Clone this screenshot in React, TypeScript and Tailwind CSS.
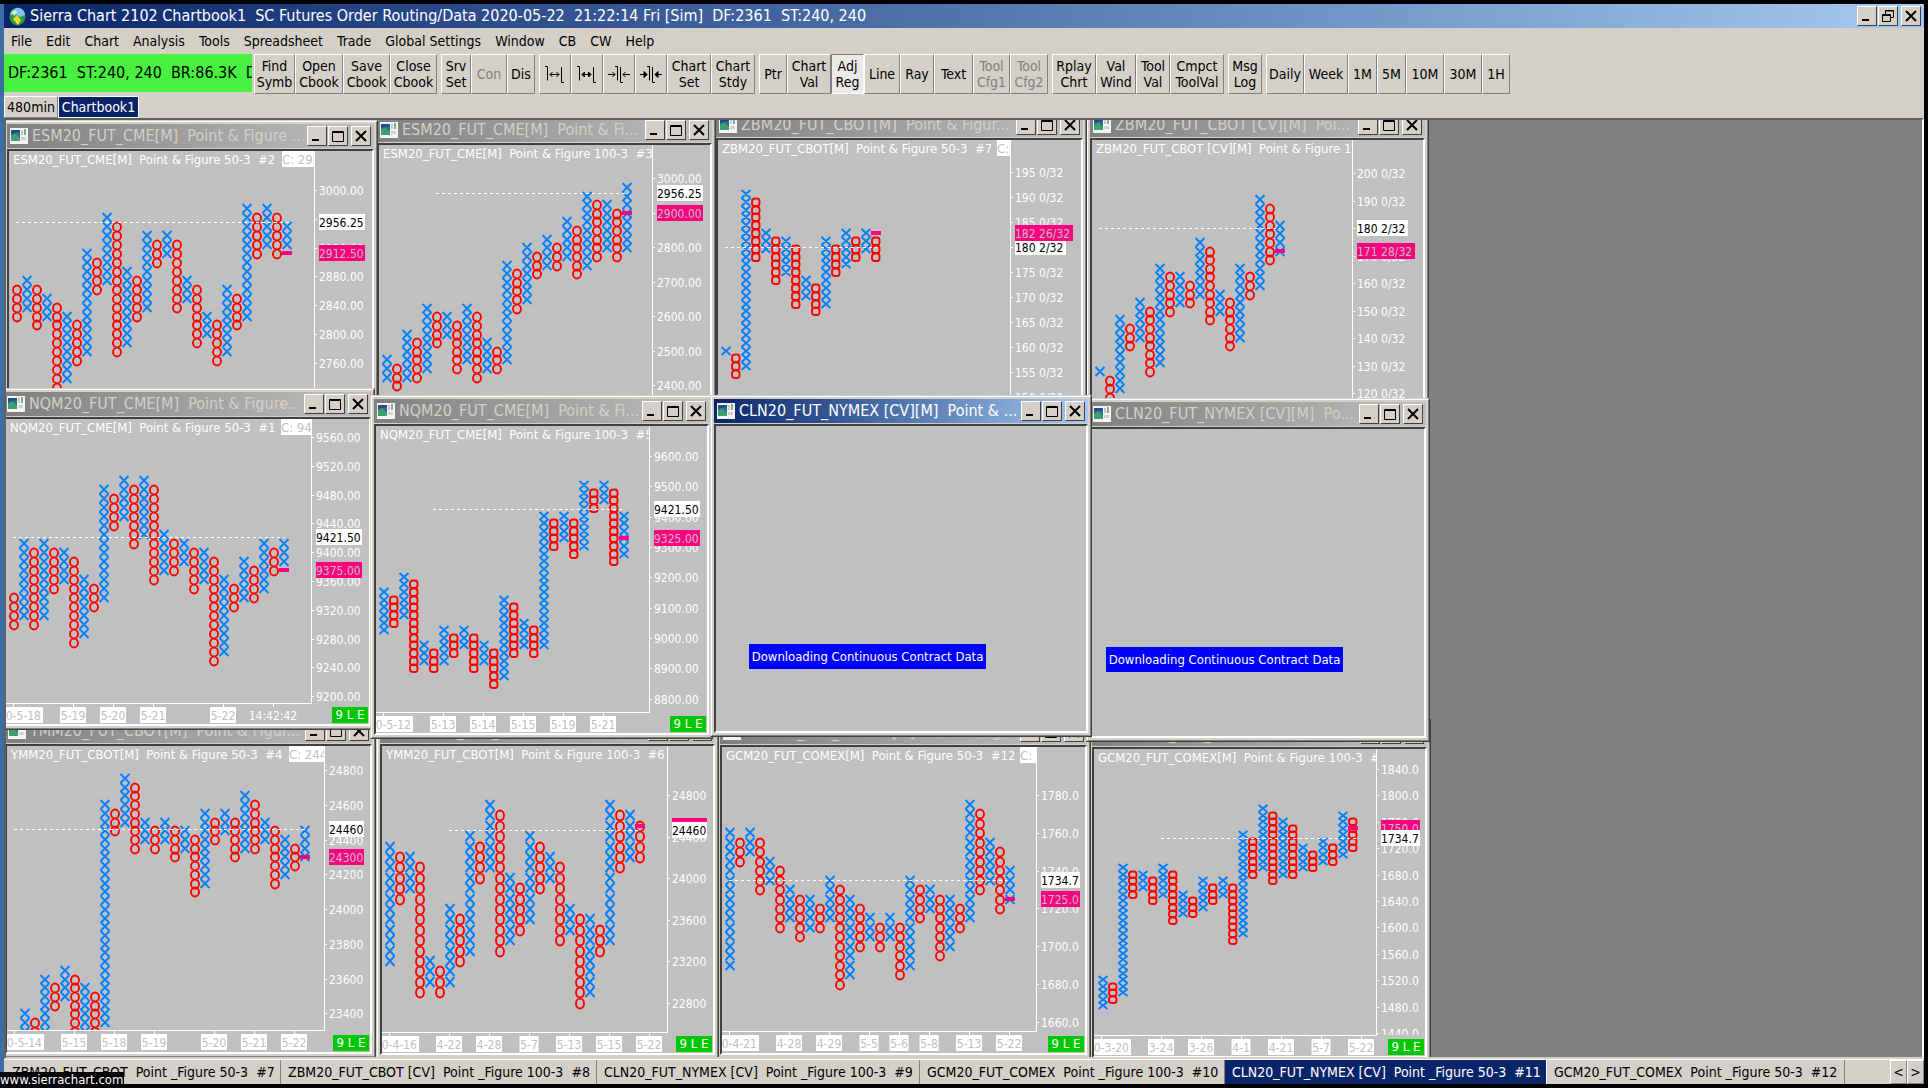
import clsx from "clsx";
import type { ReactNode } from "react";

type DateMark = { x: number; label: string; w?: number; plain?: boolean };

type ChartSpec = {
  header: string;
  closeAt?: number;
  close?: string;
  first: "X" | "O";
  x0?: number;
  y0: number;
  pitch: number;
  // one entry per column: top row - number of boxes
  cols: string;
  axisX: number;
  axisY?: number;
  scale: { from: number; step: number; count: number; y: number; dy: number };
  format: (v: number) => string;
  line: { x1: number; x2: number; y: number };
  last: { label: string; y: number; w: number };
  box: { label: string; y: number; w: number };
  boxOnTop?: boolean;
  mark: { x: number; y: number };
  dates?: DateMark[];
};

type WindowSpec = {
  title: string;
  place: string;
  active?: boolean;
  chart?: ChartSpec;
  loading?: string;
};

const cents = (v: number) => v.toFixed(2);
const tenths = (v: number) => v.toFixed(1);
const whole = (v: number) => String(v);
const bond = (v: number) => `${v} 0/32`;

const es50: ChartSpec = {
  header: "ESM20_FUT_CME[M]  Point & Figure 50-3  #2",
  closeAt: 273,
  close: "C: 2956.25",
  first: "O",
  y0: 53,
  pitch: 8.96,
  cols: "9-4 8-4 9-5 10-3 11-10 12-8 13-5 5-12 6-4 1-8 2-15 7-9 8-5 3-9 4-3 3-3 4-8 8-3 9-7 12-3 13-5 9-8 10-4 0-13 1-5 0-5 1-5 2-3",
  axisX: 305,
  scale: { from: 3000, step: -40, count: 8, y: 39, dy: 28.8 },
  format: cents,
  line: { x1: 7, x2: 283, y: 71 },
  last: { label: "2956.25", y: 71, w: 46 },
  box: { label: "2912.50", y: 102, w: 46 },
  mark: { x: 273, y: 100 },
};

const es100: ChartSpec = {
  header: "ESM20_FUT_CME[M]  Point & Figure 100-3  #3",
  first: "X",
  y0: 38,
  pitch: 8.62,
  cols: "20-3 21-3 17-6 18-5 14-8 15-4 15-3 16-6 14-7 15-8 18-4 19-3 9-12 10-5 7-7 8-3 6-4 7-3 4-5 5-6 1-9 2-7 2-6 3-6 0-8",
  axisX: 273,
  scale: { from: 3000, step: -100, count: 7, y: 33, dy: 34.5 },
  format: cents,
  line: { x1: 57, x2: 246, y: 48 },
  last: { label: "2956.25", y: 48, w: 46 },
  box: { label: "2900.00", y: 68, w: 46 },
  mark: { x: 243, y: 66 },
};

const zb50: ChartSpec = {
  header: "ZBM20_FUT_CBOT[M]  Point & Figure 50-3  #7",
  closeAt: 279,
  close: "C: 180",
  first: "X",
  y0: 50,
  pitch: 7.83,
  cols: "20-1 21-3 0-23 1-8 5-3 6-6 6-5 7-8 11-3 12-4 6-9 7-4 5-5 6-3 5-3 6-3",
  axisX: 292,
  scale: { from: 195, step: -5, count: 10, y: 32, dy: 25 },
  format: bond,
  line: { x1: 7, x2: 159, y: 107 },
  last: { label: "180 2/32", y: 107, w: 51 },
  box: { label: "182 26/32", y: 93, w: 58 },
  boxOnTop: true,
  mark: { x: 153, y: 91 },
};

const zb100: ChartSpec = {
  header: "ZBM20_FUT_CBOT [CV][M]  Point & Figure 100-3  #8",
  first: "X",
  y0: 55,
  pitch: 8.6,
  cols: "20-1 21-3 14-9 15-3 12-5 13-8 8-12 9-5 9-4 10-3 5-7 6-9 11-3 12-6 8-9 9-3 0-11 1-7 3-4",
  axisX: 260,
  scale: { from: 200, step: -10, count: 9, y: 33, dy: 27.5 },
  format: bond,
  line: { x1: 7, x2: 188, y: 88 },
  last: { label: "180 2/32", y: 88, w: 51 },
  box: { label: "171 28/32", y: 111, w: 58 },
  mark: { x: 183, y: 109 },
};

const nq50: ChartSpec = {
  header: "NQM20_FUT_CME[M]  Point & Figure 50-3  #1",
  closeAt: 275,
  close: "C: 9421.50",
  first: "O",
  y0: 57,
  pitch: 9,
  cols: "13-4 7-9 8-9 7-9 8-5 8-4 9-10 11-7 12-3 1-13 2-4 0-5 1-7 0-7 1-11 6-5 7-4 7-3 8-5 8-4 9-12 11-9 12-3 9-5 10-4 7-6 8-3 7-3",
  axisX: 305,
  axisY: 284,
  scale: { from: 9560, step: -40, count: 10, y: 18, dy: 28.8 },
  format: cents,
  line: { x1: 7, x2: 278, y: 118 },
  last: { label: "9421.50", y: 118, w: 46 },
  box: { label: "9375.00", y: 151, w: 46 },
  mark: { x: 273, y: 149 },
  dates: [
    { x: 7, label: "2020-5-18", w: 60 },
    { x: 67, label: "5-19" },
    { x: 107, label: "5-20" },
    { x: 147, label: "5-21" },
    { x: 217, label: "5-22" },
    { x: 267, label: "14:42:42", plain: true },
  ],
};

const nq100: ChartSpec = {
  header: "NQM20_FUT_CME[M]  Point & Figure 100-3  #5",
  first: "X",
  y0: 55,
  pitch: 7.64,
  cols: "14-6 15-4 12-6 13-12 21-3 22-3 19-5 20-3 19-3 20-5 21-3 22-5 15-11 16-7 18-4 19-4 4-18 5-4 4-4 5-5 0-9 1-3 0-3 1-10 4-6",
  axisX: 273,
  axisY: 286,
  scale: { from: 9600, step: -100, count: 9, y: 30, dy: 30.33 },
  format: cents,
  line: { x1: 57, x2: 246, y: 83 },
  last: { label: "9421.50", y: 83, w: 46 },
  box: { label: "9325.00", y: 112, w: 46 },
  mark: { x: 243, y: 110 },
  dates: [
    { x: 7, label: "2020-5-12", w: 60 },
    { x: 67, label: "5-13" },
    { x: 107, label: "5-14" },
    { x: 147, label: "5-15" },
    { x: 187, label: "5-19" },
    { x: 227, label: "5-21" },
  ],
};

const ym50: ChartSpec = {
  header: "YMM20_FUT_CBOT[M]  Point & Figure 50-3  #4",
  closeAt: 282,
  close: "C: 24460",
  first: "X",
  x0: 13,
  y0: 28,
  pitch: 8.72,
  cols: "27-3 28-3 23-8 24-3 22-4 23-8 24-6 25-6 3-26 4-3 0-6 1-8 5-3 6-3 5-3 6-4 6-3 7-7 4-9 5-3 4-3 5-5 2-7 3-6 5-3 6-7 7-5 8-3 6-4",
  axisX: 317,
  axisY: 284,
  scale: { from: 24800, step: -200, count: 8, y: 24, dy: 34.75 },
  format: whole,
  line: { x1: 7, x2: 298, y: 83 },
  last: { label: "24460", y: 83, w: 35 },
  box: { label: "24300", y: 111, w: 35 },
  mark: { x: 293, y: 109 },
  dates: [
    { x: 7, label: "2020-5-14", w: 60 },
    { x: 67, label: "5-15" },
    { x: 107, label: "5-18" },
    { x: 147, label: "5-19" },
    { x: 207, label: "5-20" },
    { x: 247, label: "5-21" },
    { x: 287, label: "5-22" },
  ],
};

const ym100: ChartSpec = {
  header: "YMM20_FUT_CBOT[M]  Point & Figure 100-3  #6",
  first: "X",
  y0: 54,
  pitch: 10.4,
  cols: "4-12 5-5 5-4 6-13 15-3 16-3 10-8 11-5 3-12 4-4 0-7 1-14 7-7 8-5 3-9 4-5 5-3 6-8 10-3 11-9 11-8 12-3 0-14 1-6 1-5 2-4",
  axisX: 285,
  axisY: 286,
  scale: { from: 24800, step: -400, count: 6, y: 49, dy: 41.6 },
  format: whole,
  line: { x1: 67, x2: 258, y: 84 },
  last: { label: "24460", y: 84, w: 35 },
  box: { label: "24500", y: 80, w: 35 },
  mark: { x: 253, y: 78 },
  dates: [
    { x: 7, label: "2020-4-16", w: 60 },
    { x: 67, label: "4-22" },
    { x: 107, label: "4-28" },
    { x: 147, label: "5-7", w: 19 },
    { x: 187, label: "5-13" },
    { x: 227, label: "5-15" },
    { x: 267, label: "5-22" },
  ],
};

const gc50: ChartSpec = {
  header: "GCM20_FUT_COMEX[M]  Point & Figure 50-3  #12",
  closeAt: 298,
  close: "C: 1734.7",
  first: "X",
  y0: 53,
  pitch: 9.45,
  cols: "3-15 4-3 3-3 4-6 6-3 7-7 9-4 10-5 10-4 11-3 8-5 9-11 10-9 11-5 12-3 13-3 12-3 13-6 8-10 9-4 9-3 10-7 10-6 11-3 0-13 1-9 4-5 5-7 7-4",
  axisX: 314,
  axisY: 284,
  scale: { from: 1780, step: -20, count: 7, y: 48, dy: 37.83 },
  format: tenths,
  line: { x1: 7, x2: 285, y: 133 },
  last: { label: "1734.7", y: 133, w: 39 },
  box: { label: "1725.0", y: 152, w: 39 },
  mark: { x: 283, y: 150 },
  dates: [
    { x: 7, label: "2020-4-21", w: 60 },
    { x: 67, label: "4-28" },
    { x: 107, label: "4-29" },
    { x: 147, label: "5-5", w: 19 },
    { x: 177, label: "5-6", w: 19 },
    { x: 207, label: "5-8", w: 19 },
    { x: 247, label: "5-13" },
    { x: 287, label: "5-22" },
  ],
};

const gc100: ChartSpec = {
  header: "GCM20_FUT_COMEX[M]  Point & Figure 100-3  #10",
  first: "X",
  x0: 4,
  y0: 56,
  pitch: 6.58,
  cols: "26-5 27-3 9-20 10-4 10-3 11-4 9-5 10-8 13-4 14-3 11-5 12-3 11-3 12-9 4-16 5-6 0-10 1-11 2-9 3-8 6-4 7-3 5-4 6-3 1-7 2-5",
  axisX: 282,
  axisY: 286,
  scale: { from: 1840, step: -40, count: 11, y: 20, dy: 26.4 },
  format: tenths,
  line: { x1: 67, x2: 262, y: 89 },
  last: { label: "1734.7", y: 89, w: 39 },
  box: { label: "1750.0", y: 79, w: 39 },
  mark: { x: 254, y: 77 },
  dates: [
    { x: 7, label: "2020-3-20", w: 60 },
    { x: 67, label: "3-24" },
    { x: 107, label: "3-26" },
    { x: 147, label: "4-1", w: 19 },
    { x: 187, label: "4-21" },
    { x: 227, label: "5-7", w: 19 },
    { x: 267, label: "5-22" },
  ],
};

// back to front
const windows: WindowSpec[] = [
  {
    title: "ZBM20_FUT_CBOT [CV][M]  Poi...",
    place: "left-[1080px] top-[-11px] w-[343px] h-[343px]",
    chart: zb100,
  },
  {
    title: "ZBM20_FUT_CBOT[M]  Point & Figur...",
    place: "left-[706px] top-[-11px] w-[375px] h-[343px]",
    chart: zb50,
  },
  {
    title: "ESM20_FUT_CME[M]  Point & Fi...",
    place: "left-[367px] top-[-6px] w-[343px] h-[343px]",
    chart: es100,
  },
  {
    title: "ESM20_FUT_CME[M]  Point & Figure ...",
    place: "left-[-3px] top-0 w-[375px] h-[343px]",
    chart: es50,
  },
  {
    title: "GCM20_FUT_COMEX[M]  Point & ...",
    place: "left-[1082px] top-[598px] w-[343px] h-[344px]",
    chart: gc100,
  },
  {
    title: "GCM20_FUT_COMEX[M]  Point & Fig...",
    place: "left-[710px] top-[596px] w-[375px] h-[343px]",
    chart: gc50,
  },
  {
    title: "YMM20_FUT_CBOT[M]  Point & F...",
    place: "left-[370px] top-[595px] w-[343px] h-[344px]",
    chart: ym100,
  },
  {
    title: "YMM20_FUT_CBOT[M]  Point & Figur...",
    place: "left-[-5px] top-[595px] w-[375px] h-[343px]",
    chart: ym50,
  },
  {
    title: "NQM20_FUT_CME[M]  Point & Figure...",
    place: "left-[-6px] top-[268px] w-[375px] h-[342px]",
    chart: nq50,
  },
  {
    title: "NQM20_FUT_CME[M]  Point & Fi...",
    place: "left-[364px] top-[275px] w-[343px] h-[344px]",
    chart: nq100,
  },
  {
    title: "CLN20_FUT_NYMEX [CV][M]  Po...",
    place: "left-[1080px] top-[278px] w-[344px] h-[344px]",
    loading: "pl-[14px]",
  },
  {
    title: "CLN20_FUT_NYMEX [CV][M]  Point & ...",
    place: "left-[704px] top-[275px] w-[382px] h-[342px]",
    active: true,
    loading: "pl-[33px]",
  },
];

function Column({
  kind,
  x,
  y0,
  pitch,
  top,
  count,
}: {
  kind: "X" | "O";
  x: number;
  y0: number;
  pitch: number;
  top: number;
  count: number;
}) {
  const h = Math.round(pitch);
  let d = "";
  for (let i = 0; i < count; i++) {
    const y = Math.round(y0 + (top + i) * pitch);
    if (kind === "X") {
      d += `M${x + 0.5} ${y}l9 ${h}M${x + 9.5} ${y}l-9 ${h}`;
    } else if (h >= 9) {
      const r = h / 2;
      d += `M${x + 1} ${y + r + 0.5}a4 ${r} 0 1 1 8 0a4 ${r} 0 1 1 -8 0`;
    } else {
      // short boxes leave no room for a round ring
      const side = h - 6;
      d += `M${x + 4} ${y + 0.5}h2q2.500 0 2.500 3v${side}q0 2.500 -2.500 2.500h-2q-3 0 -3 -2.500v${-side}q0 -3 3 -3z`;
    }
  }
  return <path d={d} fill="none" stroke={kind === "X" ? "#0080ff" : "#ff0000"} strokeWidth={1.9} />;
}

function PriceTag({
  x,
  y,
  w,
  label,
  fill,
  ink,
}: {
  x: number;
  y: number;
  w: number;
  label: string;
  fill: string;
  ink: string;
}) {
  return (
    <g>
      <rect x={x} y={y - 8} width={w} height={16} fill={fill} />
      <text x={x} y={y + 5} fill={ink}>
        {label}
      </text>
    </g>
  );
}

function Chart({ spec }: { spec: ChartSpec }) {
  const { axisX, axisY = 306, scale, x0 = 3, first } = spec;
  const clip = spec.header.replace(/\W+/g, "-");
  const second = first === "X" ? "O" : "X";
  const last = (
    <PriceTag x={axisX + 5} {...spec.last} fill="#ffffff" ink="#000000" />
  );
  const box = (
    <PriceTag x={axisX + 5} {...spec.box} fill="#ff0080" ink="#c0c0c0" />
  );

  return (
    <svg className="block h-full w-full text-[12px]" fill="#ffffff">
      <clipPath id={`${clip}-plot`}>
        <rect width={axisX} height={axisY} />
      </clipPath>
      <clipPath id={`${clip}-rows`}>
        <rect width={axisX + 80} height={axisY} />
      </clipPath>
      <g clipPath={`url(#${clip}-plot)`}>
        <text x={4} y={13} className="text-[13px] whitespace-pre">
          {spec.header}
        </text>
        {spec.closeAt !== undefined && (
          <g>
            <rect x={spec.closeAt} width={60} height={16} />
            <text x={spec.closeAt} y={13} fill="#c0c0c0" className="text-[13px]">
              {spec.close}
            </text>
          </g>
        )}
        {spec.cols.split(" ").map((col, i) => {
          const [top, count] = col.split("-").map(Number);
          return (
            <Column
              key={i}
              kind={i % 2 ? second : first}
              x={x0 + i * 10}
              y0={spec.y0}
              pitch={spec.pitch}
              top={top}
              count={count}
            />
          );
        })}
        <path
          d={`M${spec.line.x1} ${spec.line.y + 0.5}H${spec.line.x2}`}
          stroke="#ffffff"
          strokeDasharray="3 3"
        />
        <rect {...spec.mark} width={10} height={4} fill="#ff0080" />
      </g>
      <g clipPath={`url(#${clip}-rows)`}>
        {Array.from({ length: scale.count }, (_, i) => {
          const y = Math.round(scale.y + i * scale.dy);
          return (
            <g key={i}>
              <rect x={axisX} y={y} width={3} height={1} />
              <text x={axisX + 5} y={y + 5}>
                {spec.format(scale.from + i * scale.step)}
              </text>
            </g>
          );
        })}
      </g>
      <rect x={axisX} width={1} height={axisY} />
      {spec.boxOnTop ? last : box}
      {spec.boxOnTop ? box : last}
      {spec.dates && (
        <g textAnchor="middle">
          <rect y={axisY} width={axisX + 1} height={1} />
          {spec.dates.map(({ x, label, w = 26, plain }) => (
            <g key={label}>
              <rect x={x} y={axisY} width={1} height={4} />
              {!plain && (
                <rect x={x - w / 2} y={axisY + 4} width={w} height={16} />
              )}
              <text x={x} y={axisY + 17} fill={plain ? "#ffffff" : "#c0c0c0"}>
                {label}
              </text>
            </g>
          ))}
        </g>
      )}
    </svg>
  );
}

const raised =
  "border border-t-white border-l-white border-r-[#404040] border-b-[#404040] bg-[#d4d0c8]";

function CaptionButton({ label, children }: { label: string; children: ReactNode }) {
  return (
    <button
      type="button"
      aria-label={label}
      className={clsx(raised, "flex h-[20px] w-[20px] items-center justify-center")}
    >
      <svg width="14" height="14" viewBox="0 0 14 14" fill="none" stroke="#000000">
        {children}
      </svg>
    </button>
  );
}

function CaptionButtons({ restore }: { restore?: boolean }) {
  return (
    <div className="flex shrink-0">
      <CaptionButton label="Minimize">
        <path d="M2 11H9" strokeWidth="2" />
      </CaptionButton>
      <div className="w-px" />
      <CaptionButton label={restore ? "Restore" : "Maximize"}>
        {restore ? (
          <>
            <path d="M4.500 5V1.500H12.500V8.500H10M4 2H13" />
            <path d="M1.500 5.500H9.500V12.500H1.500ZM1 6.500H10" />
          </>
        ) : (
          <path d="M1.500 2.500H12.500V12.500H1.500ZM1 3.500H13" />
        )}
      </CaptionButton>
      <div className="w-[3px]" />
      <CaptionButton label="Close">
        <path d="M2 2L12 12M12 2L2 12" strokeWidth="2" />
      </CaptionButton>
    </div>
  );
}

function ChartIcon() {
  return (
    <svg width="18" height="16" viewBox="0 0 18 16" className="shrink-0">
      <rect width="18" height="16" fill="#f4f4f4" />
      <rect x="1" y="2" width="9" height="11" fill="#2a6f98" />
      <path d="M1 13V8L5 5L10 10V13Z" fill="#3fa06c" />
      <path d="M1 2H10V4L1 6Z" fill="#1f4f8a" />
      <rect x="11" y="2" width="2" height="5" fill="#c8c8c8" />
      <rect x="14" y="1" width="2" height="6" fill="#7fae8c" />
      <rect x="11" y="9" width="5" height="3" fill="#d0d0d0" />
    </svg>
  );
}

function ChartWindow({ title, place, active, chart, loading }: WindowSpec) {
  return (
    <section
      className={clsx(
        "absolute border border-t-[#d4d0c8] border-l-[#d4d0c8] border-r-[#404040] border-b-[#404040]",
        place,
      )}
    >
      <div className="flex h-full flex-col border border-t-white border-l-white border-r-[#808080] border-b-[#808080] bg-[#d4d0c8] p-[2px]">
        <header
          className={clsx(
            "mb-px flex h-[24px] shrink-0 items-center gap-1 bg-linear-to-r pr-[3px] pl-[3px]",
            active ? "from-[#0a246a] to-[#a6caf0]" : "from-[#808080] to-[#c0c0c0]",
          )}
        >
          <ChartIcon />
          <h2
            className={clsx(
              "min-w-0 flex-1 overflow-hidden text-[16px] leading-[20px] whitespace-pre",
              active ? "text-white" : "text-[#d4d0c8]",
            )}
          >
            {title}
          </h2>
          <CaptionButtons />
        </header>
        <div className="relative min-h-0 flex-1 border-2 border-t-[#404040] border-r-white border-b-white border-l-[#404040] bg-[#c0c0c0]">
          {chart && <Chart spec={chart} />}
          {chart?.dates && (
            <span className="absolute right-px bottom-px h-[16px] w-[36px] bg-[#00c800] text-center text-[13px] leading-[16px] text-white">
              9 L E
            </span>
          )}
          {loading && (
            <div className={clsx("flex pt-[218px]", loading)}>
              <p className="w-[237px] bg-[#0000ff] text-center text-[13px] leading-[25px] whitespace-nowrap text-white">
                Downloading Continuous Contract Data
              </p>
            </div>
          )}
        </div>
      </div>
    </section>
  );
}

const menus = [
  "File",
  "Edit",
  "Chart",
  "Analysis",
  "Tools",
  "Spreadsheet",
  "Trade",
  "Global Settings",
  "Window",
  "CB",
  "CW",
  "Help",
];

type Tool = { label: string; w: string; off?: boolean; on?: boolean; icon?: ReactNode };

const toolGroups: Tool[][] = [
  [
    { label: "Find\nSymb", w: "w-[41px]" },
    { label: "Open\nCbook", w: "w-[48px]" },
    { label: "Save\nCbook", w: "w-[47px]" },
    { label: "Close\nCbook", w: "w-[47px]" },
  ],
  [
    { label: "Srv\nSet", w: "w-[30px]" },
    { label: "Con", w: "w-[36px]", off: true },
    { label: "Dis", w: "w-[28px]" },
  ],
  [
    {
      label: "Increase bar spacing",
      w: "w-[32px]",
      icon: <path d="M1 4.500H3.500V18.500M17.500 5V20.500H20M6 12.500H15M8.500 10L6 12.500L8.500 15M12.500 10L15 12.500L12.500 15" />,
    },
    {
      label: "Increase bar width",
      w: "w-[32px]",
      icon: (
        <>
          <path d="M1 4.500H3.500V18.500M17.500 5V20.500H20M6 12.500H15" />
          <path d="M6 12.500L8.500 10V15ZM15 12.500L12.500 10V15Z" fill="#000000" />
        </>
      ),
    },
    {
      label: "Decrease bar spacing",
      w: "w-[32px]",
      icon: <path d="M7 4.500H9.500V18.500M12.500 5V20.500H15M0 12.500H7M4.500 10L7 12.500L4.500 15M22 12.500H15M17.500 10L15 12.500L17.500 15" />,
    },
    {
      label: "Decrease bar width",
      w: "w-[32px]",
      icon: (
        <>
          <path d="M7 4.500H9.500V18.500M12.500 5V20.500H15M0 12.500H7M22 12.500H15" />
          <path d="M7 12.500L4 9.500V15.500ZM15 12.500L18 9.500V15.500Z" fill="#000000" />
        </>
      ),
    },
    { label: "Chart\nSet", w: "w-[44px]" },
    { label: "Chart\nStdy", w: "w-[44px]" },
  ],
  [
    { label: "Ptr", w: "w-[28px]" },
    { label: "Chart\nVal", w: "w-[44px]" },
    { label: "Adj\nReg", w: "w-[33px]", on: true },
    { label: "Line", w: "w-[36px]" },
    { label: "Ray", w: "w-[34px]" },
    { label: "Text", w: "w-[39px]" },
    { label: "Tool\nCfg1", w: "w-[37px]", off: true },
    { label: "Tool\nCfg2", w: "w-[38px]", off: true },
  ],
  [
    { label: "Rplay\nChrt", w: "w-[44px]" },
    { label: "Val\nWind", w: "w-[40px]" },
    { label: "Tool\nVal", w: "w-[34px]" },
    { label: "Cmpct\nToolVal", w: "w-[54px]" },
  ],
  [{ label: "Msg\nLog", w: "w-[34px]" }],
  [
    { label: "Daily", w: "w-[38px]" },
    { label: "Week", w: "w-[44px]" },
    { label: "1M", w: "w-[29px]" },
    { label: "5M", w: "w-[29px]" },
    { label: "10M", w: "w-[38px]" },
    { label: "30M", w: "w-[38px]" },
    { label: "1H", w: "w-[28px]" },
  ],
];

function ToolButton({ label, w, off, on, icon }: Tool) {
  return (
    <button
      type="button"
      disabled={off}
      aria-pressed={on}
      aria-label={icon ? label : undefined}
      className={clsx(
        "flex h-[40px] shrink-0 items-center justify-center border text-[14px] leading-[16px] whitespace-pre",
        w,
        on
          ? "border-t-[#808080] border-r-white border-b-white border-l-[#808080] bg-[#ebe9e5]"
          : "border-t-white border-r-[#808080] border-b-[#808080] border-l-white",
        off && "text-[#808080]",
      )}
    >
      {icon ? (
        <svg width="22" height="25" viewBox="0 0 22 25" fill="none" stroke="#000000">
          {icon}
        </svg>
      ) : (
        label
      )}
    </button>
  );
}

const bookTabs = [
  { label: "ZBM20_FUT_CBOT  Point _Figure 50-3  #7", w: "w-[276px]" },
  { label: "ZBM20_FUT_CBOT [CV]  Point _Figure 100-3  #8", w: "w-[316px]" },
  { label: "CLN20_FUT_NYMEX [CV]  Point _Figure 100-3  #9", w: "w-[323px]" },
  { label: "GCM20_FUT_COMEX  Point _Figure 100-3  #10", w: "w-[305px]" },
  { label: "CLN20_FUT_NYMEX [CV]  Point _Figure 50-3  #11", w: "w-[322px]", on: true },
  { label: "GCM20_FUT_COMEX  Point _Figure 50-3  #12", w: "w-[298px]" },
];

export default function App() {
  return (
    <div className="relative flex h-screen flex-col overflow-hidden bg-black pt-[4px] pr-[4px] pb-[4px] font-['DejaVu_Sans_Condensed','DejaVu_Sans',sans-serif] text-black">
      <div className="flex min-h-0 flex-1 flex-col border-l-4 border-[#3a6ea5] bg-[#d4d0c8]">
        <header className="flex h-[24px] shrink-0 items-center gap-1 bg-linear-to-r from-[#0a246a] to-[#a6caf0] pr-[3px] pl-[5px]">
          <svg width="17" height="19" viewBox="0 0 17 19" className="shrink-0">
            <ellipse cx="8.500" cy="9.500" rx="8" ry="9" fill="#2f9a3c" />
            <path d="M1 8C2 3 6 1 9 1C13 1 16 4 16 8L11 10L7 7Z" fill="#7ec8ee" />
            <path d="M4 12L8 8L12 13L9 18Z" fill="#f2d33c" />
            <path d="M3 5L7 3L8 6L5 9Z" fill="#d8f0c0" />
          </svg>
          <h1 className="flex-1 text-[16px] leading-[20px] whitespace-pre text-white">
            {"Sierra Chart 2102 Chartbook1  SC Futures Order Routing/Data 2020-05-22  21:22:14 Fri [Sim]  DF:2361  ST:240, 240"}
          </h1>
          <CaptionButtons restore />
        </header>

        <nav className="flex h-[26px] shrink-0 items-center gap-[14px] pl-[7px] text-[14px]">
          {menus.map((m) => (
            <button key={m} type="button">
              {m}
            </button>
          ))}
        </nav>

        <div className="flex h-[40px] shrink-0 gap-[4px]">
          <div className="-mr-[2px] w-[248px] overflow-hidden border-b-2 border-[#d4d0c8] bg-[#48f040] pl-1 text-[16px] leading-[38px] whitespace-pre">
            {"DF:2361  ST:240, 240  BR:86.3K  D"}
          </div>
          {toolGroups.map((group, i) => (
            <div key={i} className="flex">
              {group.map((t) => (
                <ToolButton key={t.label} {...t} />
              ))}
            </div>
          ))}
        </div>

        <div className="flex h-[24px] shrink-0 items-end text-[14px] leading-[20px]">
          <button type="button" className="h-[22px] w-[54px] border border-t-white border-r-[#808080] border-b-[#808080] border-l-white">
            480min
          </button>
          <button type="button" className="h-[22px] w-[81px] border border-white bg-[#0a246a] text-white">
            Chartbook1
          </button>
        </div>

        <main className="relative min-h-0 flex-1 overflow-hidden border-2 border-t-[#606060] border-r-white border-b-[#d4d0c8] border-l-[#606060] bg-[#808080]">
          {windows.map((w) => (
            <ChartWindow key={w.place} {...w} />
          ))}
        </main>

        <footer className="flex h-[25px] shrink-0 border-t border-white pl-px text-[14px]">
          {bookTabs.map((t) => (
            <button
              key={t.label}
              type="button"
              className={clsx(
                "shrink-0 overflow-hidden border-r pl-[7px] text-left whitespace-pre",
                t.w,
                t.on ? "border-white bg-[#0a246a] text-white" : "border-[#808080]",
              )}
            >
              {t.label}
            </button>
          ))}
          <button type="button" aria-label="Scroll left" className="ml-auto w-[17px] border border-t-white border-r-[#808080] border-b-[#808080] border-l-white">
            &lt;
          </button>
          <button type="button" aria-label="Scroll right" className="w-[17px] border border-t-white border-r-[#808080] border-b-[#808080] border-l-white">
            &gt;
          </button>
        </footer>
      </div>

      <a
        href="#sierrachart"
        className="absolute bottom-0 left-0 h-[16px] w-[124px] bg-black text-[13px] leading-[15px] text-white"
      >
        www.sierrachart.com
      </a>
    </div>
  );
}
